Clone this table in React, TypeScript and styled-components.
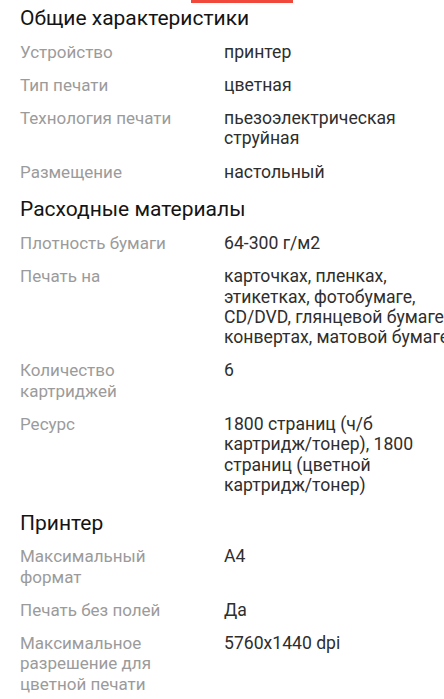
import React from "react";
import styled, { createGlobalStyle } from "styled-components";

const GlobalStyle = createGlobalStyle`
  html, body {
    margin: 0;
    padding: 0;
    background: #ffffff;
    overflow: hidden;
  }
  body {
    font-family: Roboto, "Noto Sans", "Liberation Sans", sans-serif;
    -webkit-font-smoothing: antialiased;
  }
`;

const Page = styled.div`
  width: 444px;
  overflow: hidden;
`;

const TabStrip = styled.div`
  display: flex;
  padding-left: 191px;
  height: 3px;
`;

const TabIndicator = styled.div`
  width: 102px;
  height: 3px;
  background: #f0483a;
`;

const Section = styled.section`
  display: flex;
  flex-direction: column;
`;

const Heading = styled.h2<{ $first?: boolean }>`
  margin: 0;
  padding: ${(p) => (p.$first ? "2px" : "8px")} 20px 4px;
  font-size: 21px;
  line-height: 26px;
  font-weight: 400;
  color: #141414;
  white-space: nowrap;
`;

const Row = styled.div`
  display: grid;
  grid-template-columns: 172px 236px;
  column-gap: 32px;
  padding: 6.5px 0 6.5px 20px;
  line-height: 20.3px;
`;

const Label = styled.div`
  color: #9b9b9b;
  font-size: 17px;
`;

const Value = styled.div`
  color: #2e2e2e;
  font-size: 17.6px;
`;

type Spec = { label: string; value: string };
type Group = { title: string; items: Spec[] };

const groups: Group[] = [
  {
    title: "Общие характеристики",
    items: [
      { label: "Устройство", value: "принтер" },
      { label: "Тип печати", value: "цветная" },
      { label: "Технология печати", value: "пьезоэлектрическая струйная" },
      { label: "Размещение", value: "настольный" },
    ],
  },
  {
    title: "Расходные материалы",
    items: [
      { label: "Плотность бумаги", value: "64-300 г/м2" },
      {
        label: "Печать на",
        value:
          "карточках, пленках, этикетках, фотобумаге, CD/DVD, глянцевой бумаге, конвертах, матовой бумаге",
      },
      { label: "Количество картриджей", value: "6" },
      {
        label: "Ресурс",
        value:
          "1800 страниц (ч/б картридж/тонер), 1800 страниц (цветной картридж/тонер)",
      },
    ],
  },
  {
    title: "Принтер",
    items: [
      { label: "Максимальный формат", value: "A4" },
      { label: "Печать без полей", value: "Да" },
      {
        label: "Максимальное разрешение для цветной печати",
        value: "5760x1440 dpi",
      },
    ],
  },
];

export default function App() {
  return (
    <Page>
      <GlobalStyle />
      <TabStrip>
        <TabIndicator />
      </TabStrip>
      {groups.map((g, i) => (
        <Section key={g.title}>
          <Heading $first={i === 0}>{g.title}</Heading>
          {g.items.map((it) => (
            <Row key={it.label}>
              <Label>{it.label}</Label>
              <Value>{it.value}</Value>
            </Row>
          ))}
        </Section>
      ))}
    </Page>
  );
}
